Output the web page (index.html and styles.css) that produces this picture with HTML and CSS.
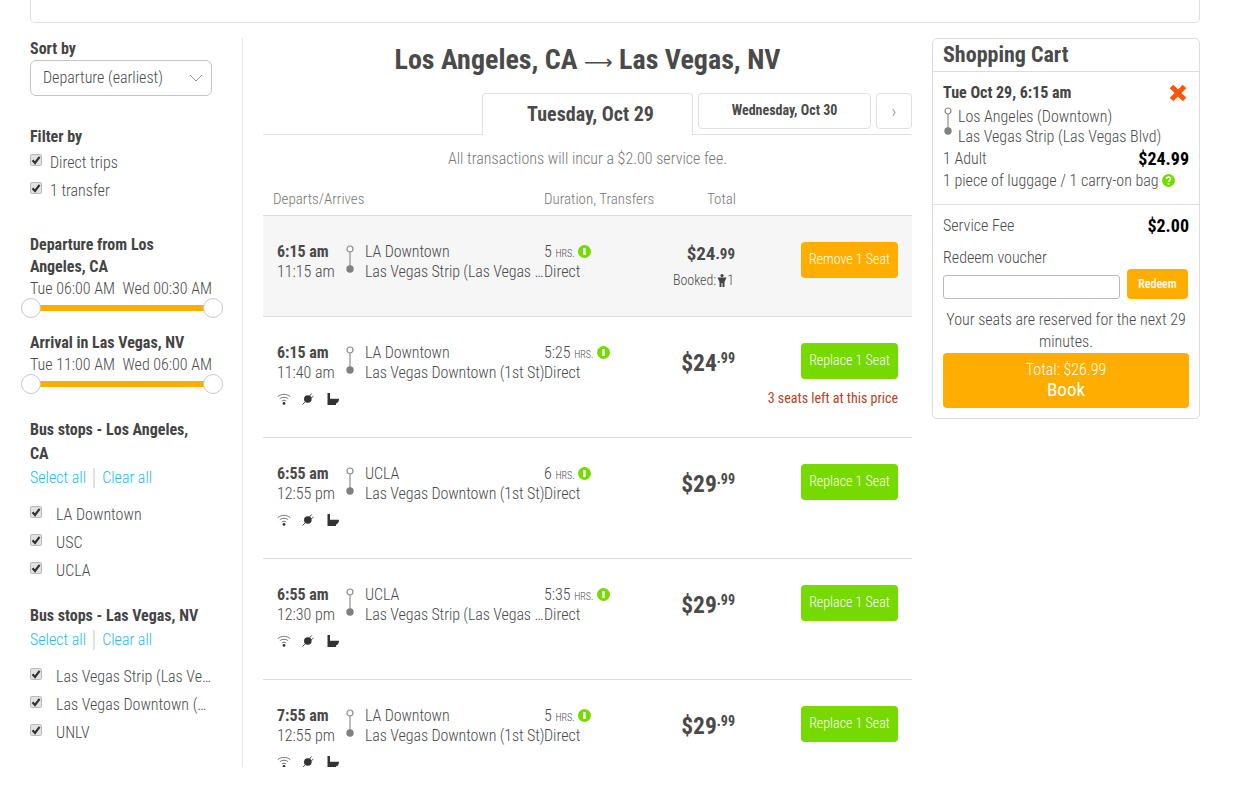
FILE: index.html
```html
<!DOCTYPE html>
<html lang="en">

<head>
    <meta charset="UTF-8">
    <meta name="viewport" content="width=device-width, initial-scale=1.0">
    <title>Los Angeles to Las Vegas - Bus Tickets</title>
    <link rel="stylesheet" href="styles.css">
</head>

<body>
    <svg class="defs" width="0" height="0">
        <symbol id="check" viewBox="0 0 12 12">
            <path d="M2.5 6.2 5 9l4.6-6.2" fill="none" stroke="#333" stroke-width="2.2" />
        </symbol>
        <symbol id="stem" viewBox="0 0 10 30">
            <circle cx="5" cy="4" r="3" fill="#fff" stroke="#8a8a8a" stroke-width="1.2" />
            <path d="M5 7v17" stroke="#999" stroke-width="1.3" />
            <circle cx="5" cy="24" r="3.7" fill="#808080" />
        </symbol>
        <symbol id="info" viewBox="0 0 13 13">
            <circle cx="6.5" cy="6.5" r="6.5" fill="#76d900" />
            <path d="M6.5 3v7" stroke="#fff" stroke-width="2.4" />
        </symbol>
        <symbol id="wifi" viewBox="0 0 14 12">
            <path d="M.8 3.6c3.6-3 8.800-3 12.400 0M2.800 5.800c2.400-2 6-2 8.400 0M4.800 8c1.200-1 3.200-1 4.400 0" fill="none" stroke="#666" stroke-width=".9" />
            <circle cx="7" cy="10.400" r="1.400" fill="#333" />
        </symbol>
        <symbol id="plug" viewBox="0 0 12 12">
            <circle cx="5.800" cy="6" r="3.800" fill="#333" />
            <path d="M.5 11.500 3.500 8.500M7.500 3 9.500.5M9 5l2.500-2" stroke="#555" stroke-width="1" />
        </symbol>
        <symbol id="toilet" viewBox="0 0 12 12">
            <path d="M.5 0h2.500v5.500h9c0 3.500-1.500 4.500-3 4.900V12H.5z" fill="#333" />
            <path d="M3 5h9" stroke="#fff" stroke-width="1" />
        </symbol>
    </svg>

    <div class="page">
        <div class="top-box"></div>

        <div class="columns">
            <aside class="sidebar">
                <div class="side-title">Sort by</div>
                <div class="sort-select">
                    <span>Departure (earliest)</span>
                    <svg width="14" height="8" viewBox="0 0 14 8"><path d="M1 1l6 6 6-6" fill="none" stroke="#999" /></svg>
                </div>

                <div class="side-title filter-title">Filter by</div>
                <label class="check-row"><span class="box"><svg width="12" height="12"><use href="#check" /></svg></span>Direct trips</label>
                <label class="check-row"><span class="box"><svg width="12" height="12"><use href="#check" /></svg></span>1 transfer</label>

                <div class="side-title departure-title">Departure from Los Angeles, CA</div>
                <div class="range-labels"><span>Tue 06:00 AM</span><span>Wed 00:30 AM</span></div>
                <div class="slider"><i></i><i></i></div>

                <div class="side-title arrival-title">Arrival in Las Vegas, NV</div>
                <div class="range-labels"><span>Tue 11:00 AM</span><span>Wed 06:00 AM</span></div>
                <div class="slider"><i></i><i></i></div>

                <div class="side-title stops-title stops-la">Bus stops - Los Angeles, CA</div>
                <div class="select-links"><a>Select all</a><a>Clear all</a></div>
                <label class="check-row stop"><span class="box"><svg width="12" height="12"><use href="#check" /></svg></span><span class="stop-name">LA Downtown</span></label>
                <label class="check-row stop"><span class="box"><svg width="12" height="12"><use href="#check" /></svg></span><span class="stop-name">USC</span></label>
                <label class="check-row stop"><span class="box"><svg width="12" height="12"><use href="#check" /></svg></span><span class="stop-name">UCLA</span></label>

                <div class="side-title stops-title stops-lv">Bus stops - Las Vegas, NV</div>
                <div class="select-links"><a>Select all</a><a>Clear all</a></div>
                <label class="check-row stop"><span class="box"><svg width="12" height="12"><use href="#check" /></svg></span><span class="stop-name">Las Vegas Strip (Las Vegas Blvd)</span></label>
                <label class="check-row stop"><span class="box"><svg width="12" height="12"><use href="#check" /></svg></span><span class="stop-name">Las Vegas Downtown (1st St)</span></label>
                <label class="check-row stop"><span class="box"><svg width="12" height="12"><use href="#check" /></svg></span><span class="stop-name">UNLV</span></label>
            </aside>

            <main class="results">
                <h1>Los Angeles, CA <span class="route-arrow">&#10230;</span> Las Vegas, NV</h1>

                <div class="tabs">
                    <div class="tab active">Tuesday, Oct 29</div>
                    <div class="tab next-day">Wednesday, Oct 30</div>
                    <div class="tab arrow">&#8250;</div>
                </div>

                <p class="fee-note">All transactions will incur a $2.00 service fee.</p>

                <div class="table-head">
                    <span class="head-departs">Departs/Arrives</span>
                    <span class="head-duration">Duration, Transfers</span>
                    <span class="head-total">Total</span>
                </div>

                <div class="trip booked">
                    <div class="times"><b>6:15 am</b><span>11:15 am</span></div>
                    <svg class="stem" width="10" height="30"><use href="#stem" /></svg>
                    <div class="places"><span>LA Downtown</span><span>Las Vegas Strip (Las Vegas Blvd)</span></div>
                    <div class="duration">
                        <span>5 <small>HRS.</small> <svg width="13" height="13"><use href="#info" /></svg></span>
                        <span>Direct</span>
                    </div>
                    <div class="price">
                        <div class="amount">$24<sup>.99</sup></div>
                        <div class="booked-count">Booked:<svg width="10" height="13" viewBox="0 0 10 13"><circle cx="5" cy="1.600" r="1.600" fill="#444" /><path d="M.5 3.500h9L7.500 8v5H5.500V9h-1v4H2.500V8z" fill="#444" /></svg>1</div>
                    </div>
                    <div class="action">
                        <button class="seat-btn orange">Remove 1 Seat</button>
                    </div>
                </div>

                <div class="trip">
                    <div class="times"><b>6:15 am</b><span>11:40 am</span></div>
                    <svg class="stem" width="10" height="30"><use href="#stem" /></svg>
                    <div class="places"><span>LA Downtown</span><span>Las Vegas Downtown (1st St)</span></div>
                    <div class="duration">
                        <span>5:25 <small>HRS.</small> <svg width="13" height="13"><use href="#info" /></svg></span>
                        <span>Direct</span>
                    </div>
                    <div class="price">
                        <div class="amount">$24<sup>.99</sup></div>
                    </div>
                    <div class="action">
                        <button class="seat-btn">Replace 1 Seat</button>
                        <div class="seats-left">3 seats left at this price</div>
                    </div>
                    <div class="amenities">
                        <svg width="14" height="12"><use href="#wifi" /></svg>
                        <svg width="12" height="12"><use href="#plug" /></svg>
                        <svg width="12" height="12"><use href="#toilet" /></svg>
                    </div>
                </div>

                <div class="trip">
                    <div class="times"><b>6:55 am</b><span>12:55 pm</span></div>
                    <svg class="stem" width="10" height="30"><use href="#stem" /></svg>
                    <div class="places"><span>UCLA</span><span>Las Vegas Downtown (1st St)</span></div>
                    <div class="duration">
                        <span>6 <small>HRS.</small> <svg width="13" height="13"><use href="#info" /></svg></span>
                        <span>Direct</span>
                    </div>
                    <div class="price">
                        <div class="amount">$29<sup>.99</sup></div>
                    </div>
                    <div class="action">
                        <button class="seat-btn">Replace 1 Seat</button>
                    </div>
                    <div class="amenities">
                        <svg width="14" height="12"><use href="#wifi" /></svg>
                        <svg width="12" height="12"><use href="#plug" /></svg>
                        <svg width="12" height="12"><use href="#toilet" /></svg>
                    </div>
                </div>

                <div class="trip">
                    <div class="times"><b>6:55 am</b><span>12:30 pm</span></div>
                    <svg class="stem" width="10" height="30"><use href="#stem" /></svg>
                    <div class="places"><span>UCLA</span><span>Las Vegas Strip (Las Vegas Blvd)</span></div>
                    <div class="duration">
                        <span>5:35 <small>HRS.</small> <svg width="13" height="13"><use href="#info" /></svg></span>
                        <span>Direct</span>
                    </div>
                    <div class="price">
                        <div class="amount">$29<sup>.99</sup></div>
                    </div>
                    <div class="action">
                        <button class="seat-btn">Replace 1 Seat</button>
                    </div>
                    <div class="amenities">
                        <svg width="14" height="12"><use href="#wifi" /></svg>
                        <svg width="12" height="12"><use href="#plug" /></svg>
                        <svg width="12" height="12"><use href="#toilet" /></svg>
                    </div>
                </div>

                <div class="trip">
                    <div class="times"><b>7:55 am</b><span>12:55 pm</span></div>
                    <svg class="stem" width="10" height="30"><use href="#stem" /></svg>
                    <div class="places"><span>LA Downtown</span><span>Las Vegas Downtown (1st St)</span></div>
                    <div class="duration">
                        <span>5 <small>HRS.</small> <svg width="13" height="13"><use href="#info" /></svg></span>
                        <span>Direct</span>
                    </div>
                    <div class="price">
                        <div class="amount">$29<sup>.99</sup></div>
                    </div>
                    <div class="action">
                        <button class="seat-btn">Replace 1 Seat</button>
                    </div>
                    <div class="amenities">
                        <svg width="14" height="12"><use href="#wifi" /></svg>
                        <svg width="12" height="12"><use href="#plug" /></svg>
                        <svg width="12" height="12"><use href="#toilet" /></svg>
                    </div>
                </div>
            </main>

            <aside class="cart">
                <h2>Shopping Cart</h2>
                <div class="cart-trip">
                    <div class="cart-row">
                        <b class="cart-date">Tue Oct 29, 6:15 am</b>
                        <svg class="remove" width="18" height="18" viewBox="0 0 18 18"><path d="M2.500 2.500l13 13M15.500 2.500l-13 13" stroke="#ff5500" stroke-width="5" /></svg>
                    </div>
                    <div class="cart-stops">
                        <svg width="10" height="30"><use href="#stem" /></svg>
                        <div class="places"><span>Los Angeles (Downtown)</span><span>Las Vegas Strip (Las Vegas Blvd)</span></div>
                    </div>
                    <div class="cart-row adult-row"><span>1 Adult</span><b class="cart-price">$24.99</b></div>
                    <div class="luggage">1 piece of luggage / 1 carry-on bag
                        <svg width="13" height="13" viewBox="0 0 13 13"><circle cx="6.500" cy="6.500" r="6.500" fill="#76d900" /><path d="M4.500 5c0-2.600 4-2.600 4 0 0 1.500-2 1.500-2 3" fill="none" stroke="#fff" stroke-width="1.500" /><circle cx="6.500" cy="10" r="1" fill="#fff" /></svg>
                    </div>
                </div>
                <div class="cart-bottom">
                    <div class="cart-row"><span>Service Fee</span><b class="cart-price">$2.00</b></div>
                    <div class="voucher-label">Redeem voucher</div>
                    <div class="voucher">
                        <input type="text">
                        <button>Redeem</button>
                    </div>
                    <p class="reserved">Your seats are reserved for the next 29 minutes.</p>
                    <button class="book"><span>Total: $26.99</span><b>Book</b></button>
                </div>
            </aside>
        </div>
    </div>
</body>

</html>
```

FILE: styles.css
```css
* {
    box-sizing: border-box;
}

html,
body {
    height: 796px;
    margin: 0;
    overflow: hidden;
}

body {
    font-family: "Roboto Condensed", Roboto, sans-serif;
    font-stretch: condensed;
    font-weight: 300;
    font-size: 16px;
    line-height: 20px;
    color: #4a4a4a;
    background: white;
}

b {
    font-weight: 700;
}

.defs {
    position: absolute;
}

.page {
    width: 1200px;
    margin-left: 30px;
    padding-right: 30px;
}

.top-box {
    width: 1170px;
    height: 23px;
    border: 1px solid #e0e0e0;
    border-top: 0;
    border-radius: 0 0 5px 5px;
}

.columns {
    display: flex;
    align-items: flex-start;
    margin-top: 15px;
}

/* left filters */
.sidebar {
    width: 213px;
    height: 729px;
    padding-right: 30px;
    border-right: 1px solid #e6e6e6;
    flex-shrink: 0;
}

.side-title {
    font-weight: 700;
    color: #444;
    line-height: 22px;
}

.sort-select {
    display: flex;
    justify-content: space-between;
    align-items: center;
    width: 182px;
    height: 36px;
    padding: 0 8px 0 12px;
    border: 1px solid #c4c4c4;
    border-radius: 6px;
}

.filter-title {
    margin-top: 30px;
}

.check-row {
    display: flex;
    align-items: flex-start;
    height: 28px;
    padding-top: 5px;
}

.box {
    display: block;
    width: 12px;
    height: 12px;
    margin: 1px 8px 0 0;
    background: #e2e2e2;
    border: 1px solid #bbb;
    border-radius: 2px;
    overflow: hidden;
    flex-shrink: 0;
}

.box svg {
    display: block;
    margin: -1px;
}

.departure-title {
    margin-top: 30px;
    width: 170px;
}

.range-labels {
    display: flex;
    justify-content: space-between;
    width: 182px;
    margin-top: 1px;
    white-space: nowrap;
}

.slider {
    position: relative;
    width: 182px;
    height: 6px;
    margin-top: 6px;
    background: #ffae00;
}

.slider i {
    position: absolute;
    top: -7px;
    left: -9px;
    width: 20px;
    height: 20px;
    background: white;
    border: 1px solid #c8c8c8;
    border-radius: 50%;
}

.slider i + i {
    left: auto;
    right: -11px;
}

.arrival-title {
    margin-top: 21px;
}

.stops-title {
    line-height: 24px;
}

.stops-la {
    margin-top: 31px;
    width: 170px;
}

.stops-lv {
    margin-top: 20px;
}

.select-links {
    display: flex;
    height: 20px;
    margin-bottom: 12px;
    margin-top: 2px;
}

.select-links a {
    color: #29b8ef;
}

.select-links a + a {
    margin-left: 7px;
    padding-left: 7px;
    border-left: 2px solid #e2e2e2;
}

.stop .box {
    margin-right: 14px;
}

.stop-name {
    display: block;
    flex-shrink: 0;
    width: 158px;
    white-space: nowrap;
    overflow: hidden;
    text-overflow: ellipsis;
}

/* results */
.results {
    width: 649px;
    height: 729px;
    margin: 0 20px;
    overflow: hidden;
    flex-shrink: 0;
}

h1 {
    margin: 5px 0 0;
    font-size: 28px;
    line-height: 34px;
    font-weight: 700;
    text-align: center;
}

.route-arrow {
    font-family: "DejaVu Sans", sans-serif;
    font-size: 20px;
    font-stretch: normal;
    font-weight: 400;
    line-height: 0;
}

.tabs {
    display: flex;
    justify-content: flex-end;
    align-items: flex-start;
    gap: 5px;
    height: 42px;
    margin-top: 16px;
    border-bottom: 1px solid #e0e0e0;
}

.tab {
    border: 1px solid #e0e0e0;
    border-radius: 4px;
    text-align: center;
    background: white;
}

.tab.active {
    width: 211px;
    height: 42px;
    padding-left: 6px;
    border-bottom: 0;
    border-radius: 4px 4px 0 0;
    font-size: 20px;
    font-weight: 700;
    line-height: 40px;
}

.next-day {
    width: 173px;
    height: 36px;
    font-size: 14px;
    font-weight: 700;
    line-height: 33px;
}

.arrow {
    width: 36px;
    height: 36px;
    font-size: 18px;
    line-height: 34px;
    color: #888;
}

.fee-note {
    margin: 14px 0 0;
    color: #777;
    text-align: center;
}

.table-head {
    display: flex;
    height: 28px;
    margin-top: 19px;
    padding-top: 1px;
    font-size: 15px;
    color: #777;
    border-bottom: 1px solid #ddd;
}

.head-departs {
    width: 281px;
    padding-left: 10px;
}

.head-duration {
    width: 138px;
}

.head-total {
    width: 54px;
    text-align: right;
}

.trip {
    display: grid;
    grid-template-columns: 68px 20px 181px 108px 81px 1fr;
    grid-template-rows: 40px 1fr;
    height: 121px;
    padding: 26px 14px 0;
    border-bottom: 1px solid #ddd;
}

.trip.booked {
    height: 101px;
    background: #f6f6f6;
}

.times,
.places,
.duration {
    display: flex;
    flex-direction: column;
    white-space: nowrap;
}

.places span {
    overflow: hidden;
    text-overflow: ellipsis;
}

.trip .places {
    letter-spacing: -0.1px;
}

.duration {
    margin-left: -2px;
}

.duration span {
    height: 20px;
}

.times b {
    font-weight: 700;
}

.stem {
    margin-top: 3px;
}

.duration small {
    font-size: 10px;
}

.duration svg {
    vertical-align: -1px;
}

.price {
    text-align: right;
}

.amount {
    font-size: 23.5px;
    font-weight: 700;
    line-height: 30px;
    margin-top: 5px;
}

.amount sup {
    font-size: 14px;
    line-height: 0;
    vertical-align: 8px;
}

.booked .amount {
    font-size: 19px;
    line-height: 24px;
    margin-top: 0;
}

.booked .amount sup {
    font-size: 15px;
    vertical-align: 1px;
}

.booked-count {
    margin: 4px 1px 0 0;
    font-size: 14px;
    white-space: nowrap;
}

.booked-count svg {
    margin-left: 1px;
    vertical-align: -2px;
}

.action {
    display: flex;
    flex-direction: column;
    align-items: flex-end;
    grid-row: span 2;
}

.seat-btn {
    width: 97px;
    height: 36px;
    padding: 0 0 2px;
    border: 0;
    border-radius: 4px;
    background: #76d900;
    color: white;
    font: inherit;
    font-size: 14px;
    font-weight: 350;
}

.seat-btn.orange {
    background: #ffae00;
}

.seats-left {
    margin-top: 9px;
    font-size: 14px;
    font-weight: 400;
    color: #b8431c;
    white-space: nowrap;
}

.amenities {
    display: flex;
    align-items: flex-start;
    gap: 11px;
    grid-column: 1 / 6;
    grid-row: 2;
    margin-top: 10px;
}

.amenities svg:last-child {
    margin-left: 2px;
}

/* cart */
.cart {
    width: 268px;
    flex-shrink: 0;
    border: 1px solid #ddd;
    border-radius: 5px;
}

.cart h2 {
    margin: 0;
    height: 33px;
    padding: 0 10px;
    font-size: 22px;
    line-height: 32px;
    font-weight: 700;
    border-bottom: 1px solid #ddd;
}

.cart-trip {
    height: 133px;
    padding: 11px 10px 0;
    border-bottom: 1px solid #ddd;
}

.cart-row {
    display: flex;
    justify-content: space-between;
    align-items: center;
}

.cart-date {
    color: #444;
}

.remove {
    margin-right: 2px;
}

.cart-stops {
    display: flex;
    gap: 5px;
    margin-top: 4px;
}

.adult-row {
    margin-top: 2px;
}

.cart-price {
    font-size: 18px;
    color: black;
}

.luggage {
    margin-top: 2px;
    white-space: nowrap;
}

.luggage svg {
    vertical-align: -1px;
}

.cart-bottom {
    padding: 11px 10px 10px;
}

.voucher-label {
    margin-top: 12px;
}

.voucher {
    display: flex;
    justify-content: space-between;
    align-items: flex-start;
    width: 245px;
    margin-top: 1px;
}

.voucher input {
    width: 177px;
    height: 24px;
    margin-top: 6px;
    border: 1px solid #bbb;
    border-radius: 3px;
}

.voucher button {
    width: 61px;
    height: 30px;
    border: 0;
    border-radius: 4px;
    background: #ffae00;
    color: white;
    font: inherit;
    font-size: 12px;
    font-weight: 500;
    padding: 0;
}

.reserved {
    margin: 10px 0 0;
    text-align: center;
    line-height: 22px;
}

.book {
    display: flex;
    flex-direction: column;
    align-items: center;
    justify-content: center;
    width: 246px;
    height: 55px;
    padding: 0 0 1px;
    margin: 0;
    border: 0;
    border-radius: 4px;
    background: #ffae00;
    color: white;
    font: inherit;
}

.book b {
    font-size: 19px;
    font-weight: 400;
}
```
